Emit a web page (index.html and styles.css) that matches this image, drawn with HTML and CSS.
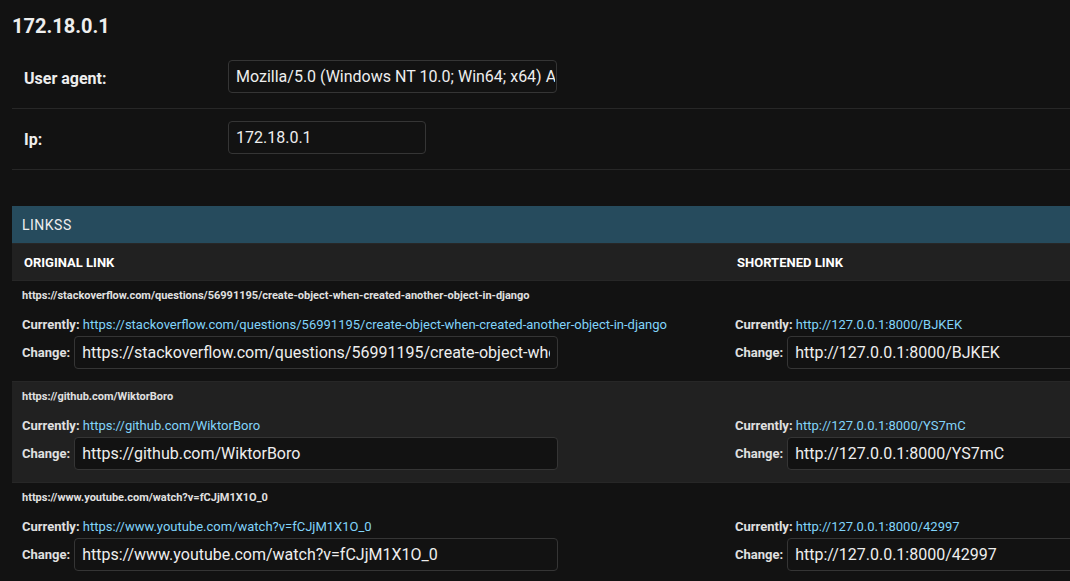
FILE: index.html
```html
<!DOCTYPE html>
<html lang="en">
<head>
<meta charset="utf-8">
<title>172.18.0.1</title>
<link rel="stylesheet" href="styles.css">
</head>
<body>
<main class="content">
  <h2 class="title">172.18.0.1</h2>
  <form>
    <div class="form-row">
      <label class="form-label" for="agent">User agent:</label>
      <input class="field field-agent" id="agent" type="text" value="Mozilla/5.0 (Windows NT 10.0; Win64; x64) A">
    </div>
    <div class="form-row">
      <label class="form-label" for="ip">Ip:</label>
      <input class="field field-ip" id="ip" type="text" value="172.18.0.1">
    </div>
    <section class="inline-group">
      <h2 class="group-title">Linkss</h2>
      <table class="links">
        <colgroup><col class="col-original"><col></colgroup>
        <thead>
          <tr><th scope="col">Original link</th><th scope="col">Shortened link</th></tr>
        </thead>
        <tbody>
          <tr>
            <td>
              <p class="original">https://stackoverflow.com/questions/56991195/create-object-when-created-another-object-in-django</p>
              <p class="current">Currently: <a href="#">https://stackoverflow.com/questions/56991195/create-object-when-created-another-object-in-django</a></p>
              <div class="change"><label for="o1">Change:</label><input class="field field-url" id="o1" type="url" value="https://stackoverflow.com/questions/56991195/create-object-when-created-another-object-in-django"></div>
            </td>
            <td>
              <p class="current">Currently: <a href="#">http://127.0.0.1:8000/BJKEK</a></p>
              <div class="change"><label for="s1">Change:</label><input class="field field-url" id="s1" type="url" value="http://127.0.0.1:8000/BJKEK"></div>
            </td>
          </tr>
          <tr>
            <td>
              <p class="original">https://github.com/WiktorBoro</p>
              <p class="current">Currently: <a href="#">https://github.com/WiktorBoro</a></p>
              <div class="change"><label for="o2">Change:</label><input class="field field-url" id="o2" type="url" value="https://github.com/WiktorBoro"></div>
            </td>
            <td>
              <p class="current">Currently: <a href="#">http://127.0.0.1:8000/YS7mC</a></p>
              <div class="change"><label for="s2">Change:</label><input class="field field-url" id="s2" type="url" value="http://127.0.0.1:8000/YS7mC"></div>
            </td>
          </tr>
          <tr>
            <td>
              <p class="original">https://www.youtube.com/watch?v=fCJjM1X1O_0</p>
              <p class="current">Currently: <a href="#">https://www.youtube.com/watch?v=fCJjM1X1O_0</a></p>
              <div class="change"><label for="o3">Change:</label><input class="field field-url" id="o3" type="url" value="https://www.youtube.com/watch?v=fCJjM1X1O_0"></div>
            </td>
            <td>
              <p class="current">Currently: <a href="#">http://127.0.0.1:8000/42997</a></p>
              <div class="change"><label for="s3">Change:</label><input class="field field-url" id="s3" type="url" value="http://127.0.0.1:8000/42997"></div>
            </td>
          </tr>
        </tbody>
      </table>
    </section>
  </form>
</main>
</body>
</html>
```
FILE: styles.css
```css
* { box-sizing: border-box; }
body {
  margin: 0;
  background: #121212;
  color: #eee;
  font-family: Roboto, "Liberation Sans", sans-serif;
  font-size: 13px;
  overflow: hidden;
}
.content { padding: 14px 0 0 12px; }
.title {
  margin: 0 0 10px;
  font-size: 20px;
  line-height: 24px;
  font-weight: 700;
}
.form-row {
  display: flex;
  align-items: flex-start;
  padding: 12px;
  border-bottom: 1px solid #272727;
}
.form-row .field { margin-bottom: 3px; }
.form-label {
  width: 204px;
  padding-top: 9px;
  font-size: 16px;
  line-height: 20px;
  font-weight: 700;
}
.field {
  height: 33px;
  padding: 5px 1px 5px 7px;
  border: 1px solid #353535;
  border-radius: 4px;
  background: #121212;
  color: #eee;
  font-family: inherit;
  font-size: 16px;
}
.field-agent { width: 329px; }
.field-ip { width: 198px; }
.field-url {
  width: 484px;
  flex: none;
  padding-right: 7px;
}
.inline-group {
  margin-top: 36px;
  overflow: hidden;
}
.group-title {
  margin: 0;
  padding: 10px 10px 8px;
  background: #264b5d;
  font-size: 14px;
  line-height: 19px;
  font-weight: 400;
  letter-spacing: 0.5px;
  text-transform: uppercase;
}
.links {
  width: 100%;
  table-layout: fixed;
  border-collapse: separate;
  border-spacing: 0;
}
.col-original { width: 713px; }
.links th {
  padding: 10px 12px 8px;
  border: solid #272727;
  border-width: 1px 0;
  background: #212121;
  color: #fff;
  font-size: 13px;
  line-height: 18px;
  font-weight: 700;
  text-align: left;
  text-transform: uppercase;
}
.links td {
  padding: 8px 9px 12px 10px;
  border-bottom: 1px solid #272727;
  vertical-align: bottom;
  white-space: nowrap;
}
.links tr:nth-child(even) td { background: #212121; }
.links p { margin: 0; }
.links .original {
  margin: 0 0 10px;
  font-size: 11px;
  line-height: 14px;
  font-weight: 700;
  color: #e0e0e0;
}
.current {
  font-weight: 700;
  line-height: 23px;
  color: #e0e0e0;
}
.current a {
  color: #81d4fa;
  font-weight: 400;
  text-decoration: none;
}
.change {
  display: flex;
  align-items: center;
  gap: 4px;
  font-weight: 700;
  color: #e0e0e0;
}
```
